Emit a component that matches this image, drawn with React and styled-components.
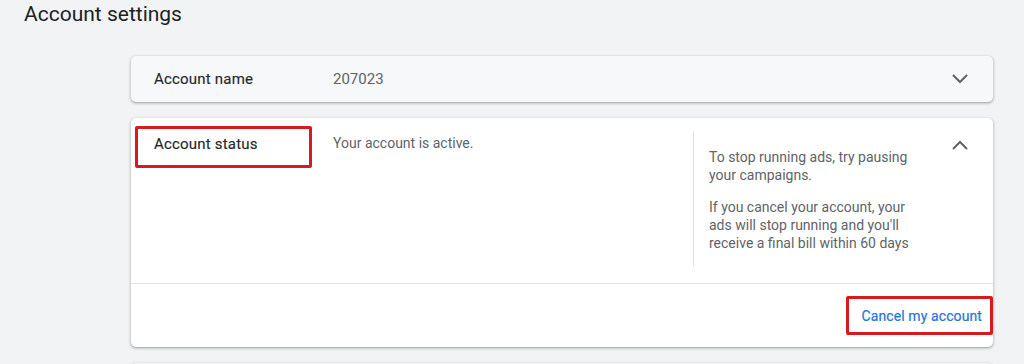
import React from 'react'
import styled, { createGlobalStyle } from 'styled-components'

const GlobalStyle = createGlobalStyle`
  html, body {
    margin: 0;
    padding: 0;
    background: #f1f3f4;
    font-family: Roboto, "Liberation Sans", Arial, sans-serif;
    -webkit-font-smoothing: antialiased;
  }
`

const Page = styled.div`
  width: 1024px;
  height: 364px;
  overflow: hidden;
  background: #f1f3f4;
`
const Title = styled.h1`
  margin: 0;
  padding-left: 24px;
  font-size: 21px;
  line-height: 28px;
  font-weight: 400;
  color: #202124;
`
const List = styled.div`
  display: flex;
  flex-direction: column;
  gap: 16px;
  width: 862px;
  margin: 28px 0 0 131px;
`
const Card = styled.div`
  background: ${p => (p.$open ? '#fff' : '#f7f8f9')};
  border-radius: 5px;
  box-shadow: 0 1px 2px rgba(60, 64, 67, 0.3), 0 1px 3px 1px rgba(60, 64, 67, 0.15);
  height: ${p => p.$height || 'auto'};
`
const Row = styled.div`
  display: flex;
  align-items: center;
  height: 46px;
  padding-left: 23px;
`
const Label = styled.div`
  width: 179px;
  font-size: 15px;
  font-weight: 400;
  color: #26282b;
  -webkit-text-stroke: 0.15px #26282b;
  letter-spacing: 0.2px;
`
const Value = styled.div`
  flex: 1;
  font-size: 15px;
  color: #5f6368;
`
const Toggle = styled.div`
  display: flex;
  justify-content: flex-end;
  align-items: ${p => (p.$top ? 'flex-start' : 'center')};
  width: 75px;
  padding-right: 25px;
  padding-top: ${p => (p.$top ? '22px' : '0')};
  box-sizing: border-box;
  color: #5f6368;
`
const Body = styled.div`
  display: flex;
  height: 165px;
`
const LabelCell = styled.div`
  width: 202px;
  padding: 8px 0 0 4px;
  box-sizing: border-box;
`
const Marked = styled(Label)`
  width: 177px;
  height: 42px;
  box-sizing: border-box;
  border: 3px solid #d71920;
  border-radius: 2px;
  padding: 5px 0 0 16px;
  line-height: 20px;
`
const Status = styled.div`
  flex: 1;
  padding-top: 15px;
  font-size: 14px;
  line-height: 20px;
  color: #5f6368;
`
const Side = styled.div`
  width: 225px;
  box-sizing: border-box;
  margin: 13px 0 16px;
  padding: 17px 0 0 15px;
  border-left: 1px solid #e3e3e3;
  font-size: 14px;
  line-height: 18px;
  color: #5f6368;

  p {
    margin: 0 0 14px;
    max-width: 202px;
  }
`
const Footer = styled.div`
  display: flex;
  justify-content: flex-end;
  align-items: flex-start;
  height: 64px;
  box-sizing: border-box;
  padding-top: 12px;
  border-top: 1px solid #e3e3e3;
`
const CancelButton = styled.button`
  height: 39px;
  box-sizing: border-box;
  border: 3px solid #d71920;
  border-radius: 2px;
  background: transparent;
  padding: 0 8px 0 13px;
  font-family: inherit;
  font-size: 14px;
  font-weight: 400;
  letter-spacing: 0.1px;
  color: #2a73d9;
  -webkit-text-stroke: 0.2px #2a73d9;
  cursor: pointer;
`

const Chevron = ({ up }) => (
  <svg width="16" height="10" viewBox="0 0 16 10">
    <polyline
      points={up ? '1,9 8,2 15,9' : '1,1 8,8 15,1'}
      fill="none"
      stroke="currentColor"
      strokeWidth="2"
    />
  </svg>
)

const App = () => {
  return (
    <>
      <GlobalStyle />
      <Page>
        <Title>Account settings</Title>
        <List>
          <Card>
            <Row>
              <Label>Account name</Label>
              <Value>207023</Value>
              <Toggle><Chevron /></Toggle>
            </Row>
          </Card>
          <Card $open>
            <Body>
              <LabelCell>
                <Marked>Account status</Marked>
              </LabelCell>
              <Status>Your account is active.</Status>
              <Side>
                <p>To stop running ads, try pausing your campaigns.</p>
                <p>If you cancel your account, your ads will stop running and you'll receive a final bill within 60 days</p>
              </Side>
              <Toggle $top><Chevron up /></Toggle>
            </Body>
            <Footer>
              <CancelButton>Cancel my account</CancelButton>
            </Footer>
          </Card>
          <Card $height="60px" />
        </List>
      </Page>
    </>
  )
}

export default App
